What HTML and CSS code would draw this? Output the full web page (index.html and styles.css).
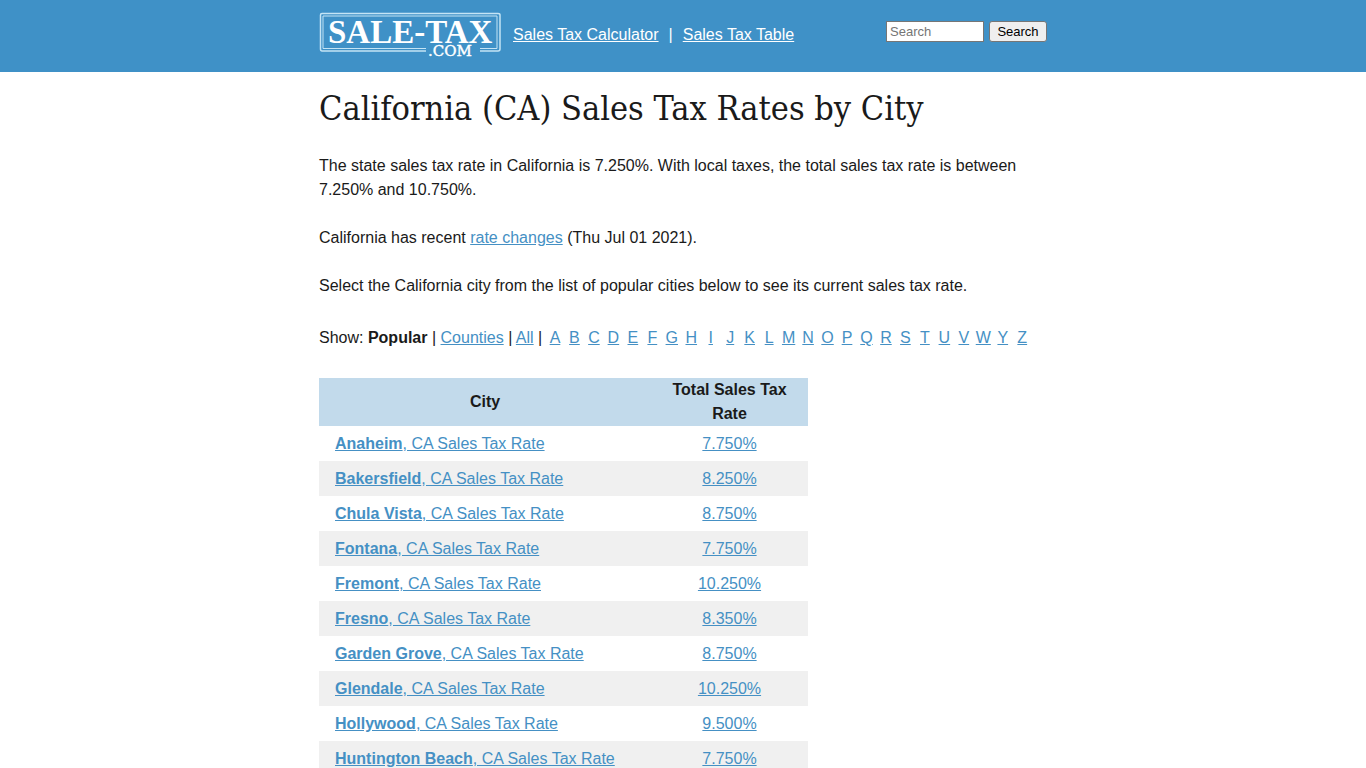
FILE: index.html
```html
<!DOCTYPE html>
<html lang="en">
<head>
    <meta charset="UTF-8">
    <meta name="viewport" content="width=device-width, initial-scale=1.0">
    <title>California (CA) Sales Tax Rates by City</title>
    <link rel="stylesheet" href="styles.css">
</head>
<body>
    <header class="header">
        <div class="container header-row">
            <a href="#" class="logo" aria-label="Sale-Tax.com">
                <svg width="182" height="48" viewBox="0 0 182 48">
                    <!-- Double frame, open at the bottom for ".COM" -->
                    <path class="frame" d="M107 39H3Q1.500 39 1.500 37V3Q1.500 1.500 3 1.500H179Q181 1.500 181 3V37Q181 39 179 39H161"/>
                    <path class="frame-inner" d="M107 36.500H4V4H178V36.500H161"/>
                    <text class="logo-name" x="9" y="31">SALE-TAX</text>
                    <text class="logo-com" x="109" y="44">.COM</text>
                </svg>
            </a>
            <nav class="nav">
                <a href="#">Sales Tax Calculator</a>
                <span>|</span>
                <a href="#">Sales Tax Table</a>
            </nav>
            <form class="search">
                <input type="text" name="q" placeholder="Search" aria-label="Search">
                <button type="submit">Search</button>
            </form>
        </div>
    </header>

    <main class="container">
        <h1>California (CA) Sales Tax Rates by City</h1>
        <p>The state sales tax rate in California is 7.250%. With local taxes, the total sales tax rate is between 7.250% and 10.750%.</p>
        <p>California has recent <a href="#">rate changes</a> (Thu Jul 01 2021).</p>
        <p>Select the California city from the list of popular cities below to see its current sales tax rate.</p>

        <div class="show">
            <div>Show: <strong>Popular</strong> | <a href="#">Counties</a> | <a href="#">All</a> |</div>
            <ul class="letters">
                <li><a href="#">A</a></li>
                <li><a href="#">B</a></li>
                <li><a href="#">C</a></li>
                <li><a href="#">D</a></li>
                <li><a href="#">E</a></li>
                <li><a href="#">F</a></li>
                <li><a href="#">G</a></li>
                <li><a href="#">H</a></li>
                <li><a href="#">I</a></li>
                <li><a href="#">J</a></li>
                <li><a href="#">K</a></li>
                <li><a href="#">L</a></li>
                <li><a href="#">M</a></li>
                <li><a href="#">N</a></li>
                <li><a href="#">O</a></li>
                <li><a href="#">P</a></li>
                <li><a href="#">Q</a></li>
                <li><a href="#">R</a></li>
                <li><a href="#">S</a></li>
                <li><a href="#">T</a></li>
                <li><a href="#">U</a></li>
                <li><a href="#">V</a></li>
                <li><a href="#">W</a></li>
                <li><a href="#">Y</a></li>
                <li><a href="#">Z</a></li>
            </ul>
        </div>

        <table class="rates">
            <thead>
                <tr><th class="city">City</th><th>Total Sales Tax Rate</th></tr>
            </thead>
            <tbody>
                <tr><td><a href="#"><strong>Anaheim</strong>, CA Sales Tax Rate</a></td><td class="rate"><a href="#">7.750%</a></td></tr>
                <tr><td><a href="#"><strong>Bakersfield</strong>, CA Sales Tax Rate</a></td><td class="rate"><a href="#">8.250%</a></td></tr>
                <tr><td><a href="#"><strong>Chula Vista</strong>, CA Sales Tax Rate</a></td><td class="rate"><a href="#">8.750%</a></td></tr>
                <tr><td><a href="#"><strong>Fontana</strong>, CA Sales Tax Rate</a></td><td class="rate"><a href="#">7.750%</a></td></tr>
                <tr><td><a href="#"><strong>Fremont</strong>, CA Sales Tax Rate</a></td><td class="rate"><a href="#">10.250%</a></td></tr>
                <tr><td><a href="#"><strong>Fresno</strong>, CA Sales Tax Rate</a></td><td class="rate"><a href="#">8.350%</a></td></tr>
                <tr><td><a href="#"><strong>Garden Grove</strong>, CA Sales Tax Rate</a></td><td class="rate"><a href="#">8.750%</a></td></tr>
                <tr><td><a href="#"><strong>Glendale</strong>, CA Sales Tax Rate</a></td><td class="rate"><a href="#">10.250%</a></td></tr>
                <tr><td><a href="#"><strong>Hollywood</strong>, CA Sales Tax Rate</a></td><td class="rate"><a href="#">9.500%</a></td></tr>
                <tr><td><a href="#"><strong>Huntington Beach</strong>, CA Sales Tax Rate</a></td><td class="rate"><a href="#">7.750%</a></td></tr>
            </tbody>
        </table>
    </main>
</body>
</html>
```
FILE: styles.css
```css
body {
    font-family: "Liberation Sans", Arial, sans-serif;
    font-size: 16px;
    line-height: 24px;
    color: #1a1a1a;
    background-color: #fff;
    margin: 0;
    overflow-x: hidden;
}
html {
    scrollbar-width: none;
}
a {
    color: #4590c4;
}
.container {
    max-width: 728px;
    margin: 0 auto;
}
.header {
    background-color: #3f91c7;
    color: #fff;
}
.header-row {
    display: flex;
    align-items: flex-start;
    padding: 12px 0;
}
.logo svg {
    display: block;
}
.frame,
.frame-inner {
    fill: none;
    stroke: #c4e4f5;
    stroke-width: 1.5;
}
.frame-inner {
    stroke-width: 1;
}
.logo-name {
    font-family: "Liberation Serif", "Times New Roman", serif;
    font-size: 33px;
    font-weight: bold;
    fill: #fff;
}
.logo-com {
    font-family: "DejaVu Serif", serif;
    font-size: 15px;
    fill: #fff;
    stroke: #fff;
    stroke-width: 0.4;
}
.nav {
    display: flex;
    gap: 10px;
    padding: 11px 0 0 12px;
}
.nav a {
    color: #fff;
}
.search {
    display: flex;
    gap: 5px;
    margin-left: auto;
    padding-top: 9px;
}
.search input,
.search button {
    box-sizing: border-box;
    height: 21px;
    font-family: "Liberation Sans", Arial, sans-serif;
    font-size: 13px;
    border: 1px solid #767676;
}
.search input {
    width: 98px;
    padding: 1px 3px;
}
.search button {
    width: 58px;
    padding: 1px 6px;
    color: #000;
    background-color: #efefef;
    border-radius: 3px;
}
h1 {
    font-family: "DejaVu Serif Condensed", "DejaVu Serif", serif;
    font-size: 34px;
    font-weight: normal;
    line-height: 48px;
    margin: 12px 0 22px;
}
p {
    margin: 0 0 24px;
}
.show {
    display: flex;
    margin: 28px 0;
    padding-right: 15px;
}
.letters {
    display: flex;
    flex: 1;
    list-style: none;
    margin: 0;
    padding: 0 0 0 3px;
}
.letters li {
    flex: 1 1 0;
    min-width: 0;
    text-align: center;
}
.rates {
    width: 489px;
    border-collapse: collapse;
}
.rates th {
    padding: 0 16px;
    background-color: #c2daeb;
}
.rates .city {
    width: 300px;
}
.rates td {
    padding: 6px 16px 5px;
}
.rates tbody tr:nth-child(even) {
    background-color: #f0f0f0;
}
.rates .rate {
    text-align: center;
}
```
